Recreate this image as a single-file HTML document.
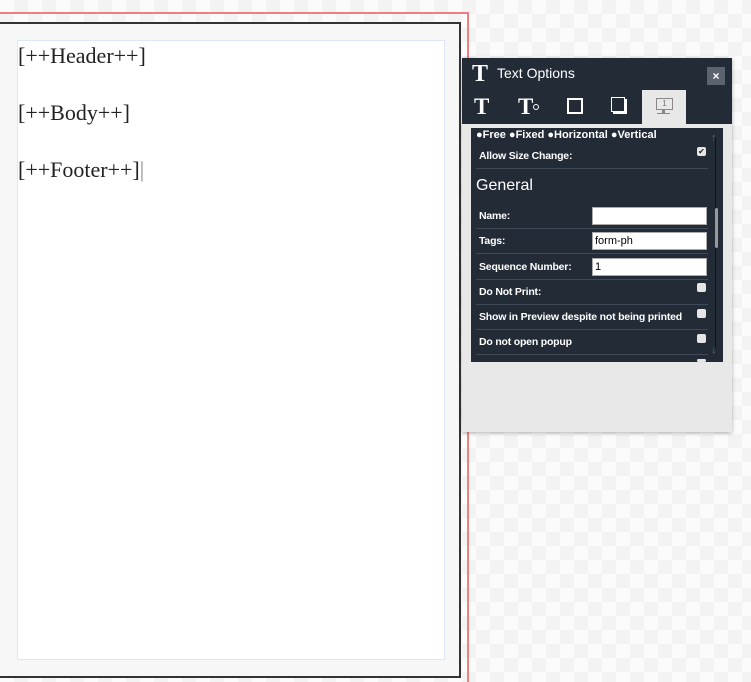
<!DOCTYPE html>
<html><head><style>
body{margin:0;width:751px;height:682px;overflow:hidden;position:relative;font-family:"Liberation Sans",sans-serif;
background-color:#fbfbfb;background-image:linear-gradient(45deg,#f3f3f3 25%,transparent 25%,transparent 75%,#f3f3f3 75%),linear-gradient(45deg,#f3f3f3 25%,transparent 25%,transparent 75%,#f3f3f3 75%);background-size:28px 28px;background-position:0 0,14px 14px;}
.abs{position:absolute}
.row{position:absolute;left:476px;width:232px;border-bottom:1px solid #3e4a57;color:#fff;font-size:10.5px;font-weight:bold;height:25px;line-height:25px;padding-left:3px;box-sizing:border-box;white-space:nowrap;letter-spacing:-0.2px}
.inp{position:absolute;left:592px;width:115px;height:18px;background:#fff;border:1px solid #aaa;box-sizing:border-box;font-size:11px;line-height:16px;padding-left:2px;color:#000;font-weight:normal}
.cb{position:absolute;left:697px;width:9px;height:9px;background:#e5e5e5;border-radius:2px}
</style></head><body>
<div class="abs" style="left:0;top:12px;width:469px;height:2px;background:#f08080"></div>
<div class="abs" style="left:467px;top:12px;width:2px;height:670px;background:#f08080"></div>
<div class="abs" style="left:-2px;top:22px;width:459px;height:652px;border:2px solid #333;background:#f7f7f7;box-sizing:content-box"></div>
<div class="abs" style="left:17px;top:40px;width:426px;height:618px;border:1px solid #dce8f8;background:#fff"></div>
<div class="abs" style="left:18px;top:41px;font-family:'Liberation Serif',serif;font-size:22px;color:#222;line-height:29px">
<div style="position:absolute;top:0;white-space:nowrap">[++Header++]</div>
<div style="position:absolute;top:57px;white-space:nowrap">[++Body++]</div>
<div style="position:absolute;top:114px;white-space:nowrap">[++Footer++]<span style="color:#888">|</span></div>
</div>
<!-- panel -->
<div class="abs" style="left:462px;top:58px;width:270px;height:374px;background:#e8e8e8;box-shadow:0 1px 4px rgba(0,0,0,.3)"></div>
<div class="abs" style="left:462px;top:58px;width:270px;height:66px;background:#222b36"></div>
<div class="abs" style="left:472px;top:61px;color:#fff;font-family:'Liberation Serif',serif;font-size:24px;font-weight:bold;line-height:26px">T</div>
<div class="abs" style="left:497px;top:65px;color:#fff;font-size:14px">Text Options</div>
<div class="abs" style="left:707px;top:67px;width:18px;height:18px;background:#5a636e;color:#fff;font-size:12px;text-align:center;line-height:18px;font-weight:bold">×</div>
<div class="abs" style="left:474px;top:94px;color:#fff;font-family:'Liberation Serif',serif;font-size:23px;font-weight:bold;line-height:26px">T</div>
<div class="abs" style="left:518px;top:94px;color:#fff;font-family:'Liberation Serif',serif;font-size:23px;font-weight:bold;line-height:26px">T</div>
<div class="abs" style="left:533px;top:104px;width:4px;height:4px;border:1.5px solid #fff;border-radius:50%"></div>
<div class="abs" style="left:567px;top:98px;width:12px;height:12px;border:2px solid #fff"></div>
<div class="abs" style="left:611px;top:97px;width:12px;height:13px;border:1.5px solid #fff;box-shadow:2px 2px 0 #fff"></div>
<div class="abs" style="left:642px;top:90px;width:44px;height:34px;background:#e8e8e8"></div>
<div class="abs" style="left:656px;top:98px;width:15px;height:10px;border:1px solid #888;font-size:8px;color:#777;text-align:center;line-height:10px">1</div>
<div class="abs" style="left:662px;top:110px;width:3px;height:3px;background:#888"></div>
<div class="abs" style="left:657px;top:113px;width:13px;height:1px;background:#888"></div>
<!-- dark content -->
<div class="abs" style="left:471px;top:128px;width:252px;height:234px;background:#222b36;overflow:hidden">
<div style="position:absolute;left:5px;top:1px;color:#fff;font-size:11px;font-weight:bold;white-space:nowrap;line-height:12px">●Free ●Fixed ●Horizontal ●Vertical</div>
<div style="position:absolute;left:244px;top:10px;width:1px;height:210px;background:#111"></div>
<div style="position:absolute;left:244px;top:80px;width:3px;height:40px;background:#999;border-radius:2px"></div>
<div style="position:absolute;left:240px;top:4px;color:#666;font-size:11px">↑</div>
<div style="position:absolute;left:240px;top:216px;color:#666;font-size:11px">↓</div>
</div>
<div class="row" style="top:144px">Allow Size Change:</div>
<div class="abs" style="left:697px;top:147px;width:9px;height:9px;background:#e5e5e5;border-radius:2px;font-size:8px;line-height:9px;text-align:center;color:#222">✔</div>
<div class="abs" style="left:476px;top:177px;color:#fff;font-size:16px">General</div>
<div class="row" style="top:204px">Name:</div><div class="inp" style="top:207px"></div>
<div class="row" style="top:229px">Tags:</div><div class="inp" style="top:232px">form-ph</div>
<div class="row" style="top:255px">Sequence Number:</div><div class="inp" style="top:258px">1</div>
<div class="row" style="top:280px">Do Not Print:</div><div class="cb" style="top:283px"></div>
<div class="row" style="top:305px">Show in Preview despite not being printed</div><div class="cb" style="top:309px"></div>
<div class="row" style="top:330px">Do not open popup</div><div class="cb" style="top:334px"></div>
<div class="cb" style="top:359px;height:3px"></div>
</body></html>
